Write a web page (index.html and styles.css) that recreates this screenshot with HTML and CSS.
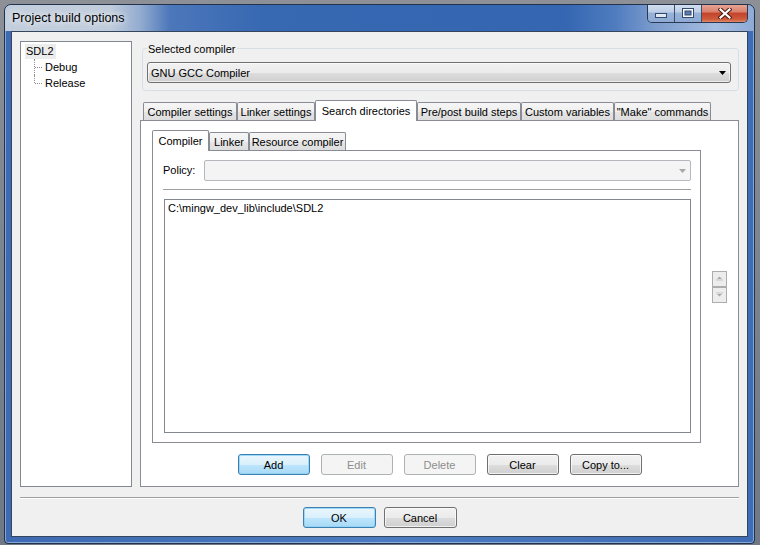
FILE: index.html
```html
<!DOCTYPE html>
<html>
<head>
<meta charset="utf-8">
<title>Project build options</title>
<link rel="stylesheet" href="styles.css">
</head>
<body>
<div class="window">
  <div class="titlebar">
    <span class="title">Project build options</span>
    <div class="caption-btns">
      <div class="cbtn cbtn-min">
        <svg width="12" height="5" viewBox="0 0 12 5"><rect x="0.5" y="0.5" width="11" height="4" fill="#dfe7f3" stroke="#34486a"/></svg>
      </div>
      <div class="cbtn cbtn-max">
        <svg width="12" height="10" viewBox="0 0 12 10"><rect x="0" y="0" width="12" height="10" fill="#33486b"/><rect x="1" y="1" width="10" height="8" fill="#f4f7fb"/><rect x="3" y="3" width="6" height="4" fill="#5a7cb3" stroke="#33486b" stroke-width="1"/></svg>
      </div>
      <div class="cbtn cbtn-close">
        <svg width="14" height="11" viewBox="0 0 14 11"><path d="M2.5 1.5 L11.5 9.5 M11.5 1.5 L2.5 9.5" stroke="#4b1c12" stroke-width="4.2" stroke-linecap="square" fill="none"/><path d="M2.5 1.5 L11.5 9.5 M11.5 1.5 L2.5 9.5" stroke="#ffffff" stroke-width="2.2" stroke-linecap="square" fill="none"/></svg>
      </div>
    </div>
  </div>
  <div class="client">
    <div class="main">
      <div class="tree">
        <div class="node root"><span class="sel">SDL2</span></div>
        <div class="node child">Debug</div>
        <div class="node child last">Release</div>
      </div>
      <div class="right">
        <fieldset class="group">
          <legend>Selected compiler</legend>
          <div class="combo">
            <span>GNU GCC Compiler</span>
            <svg class="arrow" width="7" height="4" viewBox="0 0 7 4"><path d="M0 0 H7 L3.5 4 Z" fill="#000"/></svg>
          </div>
        </fieldset>
        <div class="notebook outer-nb">
          <div class="tabs outer-tabs">
            <div class="tab t-cs">Compiler settings</div>
            <div class="tab t-ls">Linker settings</div>
            <div class="tab active t-sd">Search directories</div>
            <div class="tab t-pp">Pre/post build steps</div>
            <div class="tab t-cv">Custom variables</div>
            <div class="tab t-mc">"Make" commands</div>
          </div>
          <div class="page outer-page">
            <div class="page-row">
              <div class="notebook inner-nb">
                <div class="tabs inner-tabs">
                  <div class="tab active t-c">Compiler</div>
                  <div class="tab t-l">Linker</div>
                  <div class="tab t-rc">Resource compiler</div>
                </div>
                <div class="page inner-page">
                  <div class="policy-row">
                    <span class="policy-label">Policy:</span>
                    <div class="combo combo-disabled">
                      <svg class="arrow" width="7" height="4" viewBox="0 0 7 4"><path d="M0 0 H7 L3.5 4 Z" fill="#a7a7a7"/></svg>
                    </div>
                  </div>
                  <div class="hsep"></div>
                  <div class="listbox">
                    <div class="list-item">C:\mingw_dev_lib\include\SDL2</div>
                  </div>
                </div>
              </div>
              <div class="spin">
                <div class="spin-btn">
                  <svg width="7" height="5" viewBox="0 0 7 5"><path d="M1 3 L3.5 0.5 L6 3 Z" fill="#a9a9a9"/><rect x="0" y="3.5" width="7" height="1" fill="#c4c4c4"/></svg>
                </div>
                <div class="spin-btn">
                  <svg width="7" height="5" viewBox="0 0 7 5"><rect x="0" y="0.5" width="7" height="1" fill="#c4c4c4"/><path d="M1 2 L6 2 L3.5 4.5 Z" fill="#a9a9a9"/></svg>
                </div>
              </div>
            </div>
            <div class="btn-row">
              <div class="btn btn-default">Add</div>
              <div class="btn btn-disabled">Edit</div>
              <div class="btn btn-disabled">Delete</div>
              <div class="btn">Clear</div>
              <div class="btn">Copy to...</div>
            </div>
          </div>
        </div>
      </div>
    </div>
    <div class="dlg-sep"></div>
    <div class="dlg-btns">
      <div class="btn btn-default btn-dlg">OK</div>
      <div class="btn btn-dlg">Cancel</div>
    </div>
  </div>
</div>
</body>
</html>
```

FILE: styles.css
```css
* { box-sizing: border-box; }
html, body { margin: 0; padding: 0; }
body {
  width: 760px;
  height: 545px;
  overflow: hidden;
  background: linear-gradient(180deg, #8d9096 0%, #7e868f 40%, #6f7884 100%);
  font-family: "Liberation Sans", Arial, sans-serif;
  font-size: 11px;
  line-height: 13px;
  color: #000;
}

/* window frame */
.window {
  margin: 4px 0 0 4px;
  width: 751px;
  height: 540px;
  border: 1px solid #22324a;
  border-radius: 7px 7px 4px 4px;
  overflow: hidden;
  background: linear-gradient(90deg, #3d6ab2 0%, #4b7bc1 50%, #3f6db5 100%);
  box-shadow: inset 0 0 0 1px rgba(190, 215, 245, 0.55);
  display: flex;
  flex-direction: column;
}
.titlebar {
  height: 26px;
  flex: 0 0 26px;
  display: flex;
  align-items: flex-start;
  padding-left: 7px;
  background: linear-gradient(90deg, #c3cedd 0px, #c0ccdc 105px, #93acd0 135px, #4c77ba 165px, #3768b2 260px, #3466b1 560px, #4f7cbf 610px, #7c9ccd 650px, #a5bde0 710px, #8eabd6 749px);
}
.title {
  font-size: 12.5px;
  line-height: 26px;
  color: #000;
  text-shadow: 0 0 6px rgba(255, 255, 255, 0.9), 0 0 10px rgba(255, 255, 255, 0.7);
}
.caption-btns {
  margin-left: auto;
  margin-right: 6px;
  margin-top: -1px;
  display: flex;
  border: 1px solid #2a3850;
  border-top: none;
  border-radius: 0 0 5px 5px;
  overflow: hidden;
  height: 19px;
}
.cbtn {
  display: flex;
  align-items: center;
  justify-content: center;
  height: 18px;
}
.cbtn-min, .cbtn-max {
  width: 27px;
  background: linear-gradient(180deg, #d6e1f0 0%, #bccde6 45%, #98b2d8 50%, #8eaad4 100%);
  border-right: 1px solid #3c4f6e;
}
.cbtn-min svg { margin-top: 4px; }
.cbtn-close {
  width: 45px;
  background: linear-gradient(180deg, #e9a99a 0%, #d9806b 45%, #c2432a 50%, #cf5a3c 85%, #e08a6a 100%);
}

/* client area */
.client {
  margin: 0 6px 0 6px;
  height: 506px;
  flex: 0 0 506px;
  border: 1px solid #34455c;
  background: #f0f0f0;
  padding: 9px 8px 8px 8px;
  display: flex;
  flex-direction: column;
}
.main {
  height: 446px;
  flex: 0 0 446px;
  display: flex;
  gap: 8px;
}

/* tree */
.tree {
  width: 112px;
  flex: 0 0 112px;
  border: 1px solid #828790;
  background: #fff;
  padding-top: 1px;
}
.node {
  height: 16px;
  line-height: 16px;
  white-space: nowrap;
}
.root { padding-left: 4px; }
.root .sel {
  display: inline-block;
  background: #ececec;
  padding: 0 2px 0 1px;
  line-height: 15px;
}
.child {
  position: relative;
  padding-left: 24px;
}
.child::before {
  content: "";
  position: absolute;
  left: 13px;
  top: 0;
  height: 16px;
  border-left: 1px dotted #8f8f8f;
}
.child.last::before { height: 8px; }
.child::after {
  content: "";
  position: absolute;
  left: 14px;
  top: 8px;
  width: 7px;
  border-top: 1px dotted #8f8f8f;
}

/* right column */
.right {
  width: 599px;
  flex: 0 0 599px;
  display: flex;
  flex-direction: column;
}
.group {
  margin: 0 0 0 2px;
  width: 597px;
  border: 1px solid #d5dfe5;
  border-radius: 3px;
  padding: 6px 7px 7px 4px;
  min-width: 0;
}
.group legend {
  padding: 2px 2px 0 1px;
  margin: 0;
  line-height: 13px;
}
.combo {
  height: 21px;
  border: 1px solid #707070;
  border-radius: 3px;
  background: linear-gradient(180deg, #f2f2f2 0%, #ebebeb 50%, #dddddd 51%, #cfcfcf 100%);
  box-shadow: inset 0 0 0 1px rgba(255, 255, 255, 0.6);
  display: flex;
  align-items: center;
  padding: 1px 4px 0 3px;
}
.combo .arrow { margin-left: auto; margin-top: -1px; }
.combo-disabled {
  flex: 1;
  border-color: #b5b9bd;
  background: #f4f4f4;
  box-shadow: none;
  border-radius: 2px;
  padding-right: 4px;
}

/* notebooks */
.notebook { display: flex; flex-direction: column; }
.outer-nb { margin-top: 9px; flex: 1; }
.tabs {
  height: 20px;
  flex: 0 0 20px;
  display: flex;
  align-items: flex-end;
  position: relative;
  z-index: 1;
}
.outer-tabs { padding-left: 3px; }
.tab {
  height: 18px;
  border: 1px solid #898c95;
  border-bottom: none;
  border-radius: 2px 2px 0 0;
  background: linear-gradient(180deg, #f6f6f6 0%, #efefef 50%, #e5e5e5 51%, #dddddd 100%);
  text-align: center;
  line-height: 19px;
  white-space: nowrap;
}
.tab.active {
  height: 21px;
  margin-bottom: -1px;
  background: #fff;
  line-height: 20px;
  padding-bottom: 2px;
}
.t-cs { width: 94px; }
.t-ls { width: 78px; }
.t-sd { width: 102px; }
.t-pp { width: 104px; }
.t-cv { width: 93px; }
.t-mc { width: 97px; }
.t-c { width: 57px; }
.t-l { width: 40px; }
.t-rc { width: 97px; }

.page {
  border: 1px solid #898c95;
  background: #fff;
}
.outer-page {
  flex: 1;
  padding: 9px 11px 11px 11px;
  display: flex;
  flex-direction: column;
}
.page-row {
  height: 313px;
  flex: 0 0 313px;
  display: flex;
  align-items: center;
  gap: 11px;
}
.inner-nb {
  width: 549px;
  flex: 0 0 549px;
  height: 313px;
}
.inner-page {
  flex: 1;
  padding: 9px 9px 9px 10px;
  display: flex;
  flex-direction: column;
}
.policy-row {
  height: 21px;
  display: flex;
  align-items: center;
}
.policy-label { width: 41px; flex: 0 0 41px; }
.hsep {
  margin-top: 8px;
  height: 2px;
  border-top: 1px solid #a0a0a0;
  border-bottom: 1px solid #ffffff;
}
.listbox {
  margin: 8px 0 0 1px;
  flex: 1;
  border: 1px solid #828790;
  background: #fff;
  padding: 2px 3px;
}
.list-item { line-height: 13px; }

.spin {
  width: 15px;
  flex: 0 0 15px;
  display: flex;
  flex-direction: column;
}
.spin-btn {
  height: 16px;
  border: 1px solid #adadad;
  background: #ededed;
  display: flex;
  align-items: center;
  justify-content: center;
}

/* buttons */
.btn-row {
  margin-top: 11px;
  display: flex;
  justify-content: center;
  gap: 11px;
}
.btn {
  width: 72px;
  height: 21px;
  border: 1px solid #707070;
  border-radius: 3px;
  background: linear-gradient(180deg, #f2f2f2 0%, #ebebeb 50%, #dddddd 51%, #cfcfcf 100%);
  box-shadow: inset 0 0 0 1px rgba(255, 255, 255, 0.7);
  text-align: center;
  line-height: 21px;
}
.btn-default {
  border-color: #3c7fb1;
  background: linear-gradient(180deg, #eaf6fd 0%, #d9f0fc 50%, #bee6fd 51%, #a7d9f5 100%);
  box-shadow: inset 0 0 0 1px rgba(140, 210, 245, 0.8);
}
.btn-disabled {
  border-color: #adb2b5;
  background: #f4f4f4;
  box-shadow: none;
  color: #8d8d8d;
}

.dlg-sep {
  margin: 10px 0 0 0;
  height: 2px;
  border-top: 1px solid #a0a0a0;
  border-bottom: 1px solid #ffffff;
}
.dlg-btns {
  margin-top: 8px;
  display: flex;
  justify-content: center;
  gap: 8px;
}
.btn-dlg { width: 73px; }
```
